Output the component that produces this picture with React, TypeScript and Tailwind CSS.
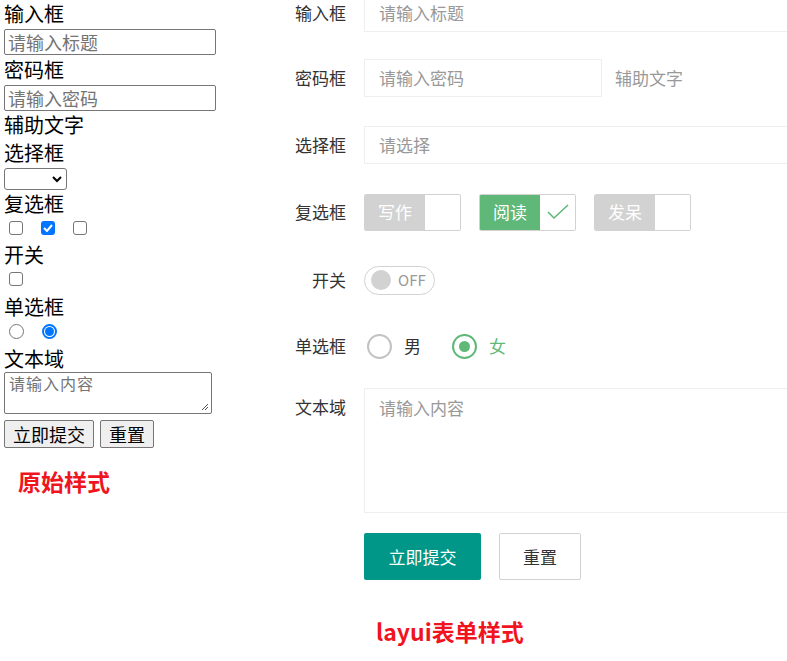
import React from "react";

const F = { fontFamily: '"Noto Sans CJK SC", "Microsoft YaHei", sans-serif' };

function Check({ label, on }: { label: string; on?: boolean }) {
  return (
    <div className={`flex h-[37px] w-[97px] border rounded-[2px] overflow-hidden ${on ? "border-[#d2d2d2]" : "border-[#d2d2d2]"}`}>
      <div className={`w-[60px] flex items-center justify-center text-white text-[17px] ${on ? "bg-[#5fb878]" : "bg-[#d2d2d2]"}`}>{label}</div>
      <div className="flex-1 bg-white flex items-center justify-center">
        {on && (
          <svg width="22" height="16" viewBox="0 0 22 16"><path d="M1 8l6 6L21 1" fill="none" stroke="#5fb878" strokeWidth="1.6" /></svg>
        )}
      </div>
    </div>
  );
}

function Row({ label, children, h = 38, mb = 27 }: { label: string; children: React.ReactNode; h?: number; mb?: number }) {
  return (
    <div className="flex" style={{ marginBottom: mb }}>
      <div className="w-[66px] text-right text-[17px] text-[#333] shrink-0" style={{ lineHeight: "38px" }}>{label}</div>
      <div className="ml-[18px] flex-1 flex items-center" style={{ minHeight: h }}>{children}</div>
    </div>
  );
}

export default function App() {
  return (
    <div className="flex bg-white w-[787px] h-[661px] overflow-hidden" style={F}>
      <div className="w-[280px] shrink-0 pl-[4px] text-[20px] text-black">
        <div className="h-[28px] leading-[28px]">输入框</div>
        <div className="mt-[1px] w-[212px] h-[26px] border border-[#767676] rounded-[2px] px-[3px] text-[18px] text-[#757575] leading-[24px]">请输入标题</div>
        <div className="h-[29px] leading-[29px]">密码框</div>
        <div className="mt-[1px] w-[212px] h-[26px] border border-[#767676] rounded-[2px] px-[3px] text-[18px] text-[#757575] leading-[24px]">请输入密码</div>
        <div className="h-[28px] leading-[28px]">辅助文字</div>
        <div className="h-[27px] leading-[27px]">选择框</div>
        <div className="mt-[2px] w-[63px] h-[22px] border border-[#767676] rounded-[3px] flex items-center justify-end pr-[4px]">
          <svg width="10" height="7" viewBox="0 0 10 7"><path d="M1 1l4 4 4-4" fill="none" stroke="#000" strokeWidth="2" /></svg>
        </div>
        <div className="h-[28px] leading-[28px]">复选框</div>
        <div className="flex gap-[18px] pl-[5px] mt-[3px]">
          <div className="w-[14px] h-[14px] border border-[#767676] rounded-[3px]" />
          <div className="w-[14px] h-[14px] bg-[#0075ff] rounded-[3px] flex items-center justify-center">
            <svg width="10" height="8" viewBox="0 0 10 8"><path d="M1 4l3 3 5-6" fill="none" stroke="#fff" strokeWidth="2" /></svg>
          </div>
          <div className="w-[14px] h-[14px] border border-[#767676] rounded-[3px]" />
        </div>
        <div className="h-[28px] leading-[28px] mt-[6px]">开关</div>
        <div className="pl-[5px] mt-[3px]"><div className="w-[14px] h-[14px] border border-[#767676] rounded-[3px]" /></div>
        <div className="h-[28px] leading-[28px] mt-[7px]">单选框</div>
        <div className="flex gap-[18px] pl-[5px] mt-[3px]">
          <div className="w-[15px] h-[15px] border border-[#767676] rounded-full" />
          <div className="w-[15px] h-[15px] border-2 border-[#0075ff] rounded-full flex items-center justify-center"><div className="w-[9px] h-[9px] bg-[#0075ff] rounded-full" /></div>
        </div>
        <div className="h-[28px] leading-[28px] mt-[6px]">文本域</div>
        <div className="relative -mt-[1px] w-[208px] h-[42px] border border-[#767676] rounded-[2px] px-[4px] text-[16px] text-[#757575] leading-[20px] tracking-[1px]">
          请输入内容
          <svg className="absolute right-[2px] bottom-[2px]" width="8" height="8" viewBox="0 0 8 8"><path d="M7 1L1 7M7 4L4 7" stroke="#555" strokeWidth="1" /></svg>
        </div>
        <div className="flex gap-[6px] mt-[6px] text-[18px]">
          <div className="h-[28px] px-[8px] border border-[#767676] rounded-[2px] bg-[#efefef] leading-[26px]">立即提交</div>
          <div className="h-[28px] px-[8px] border border-[#767676] rounded-[2px] bg-[#efefef] leading-[26px]">重置</div>
        </div>
        <div className="mt-[16px] ml-[14px] text-[23px] font-bold text-[#f0141e]">原始样式</div>
      </div>

      <div className="flex-1 -mt-[6px]">
        <Row label="输入框" mb={27}>
          <div className="h-[38px] flex-1 border border-[#eee] border-r-0 pl-[14px] text-[17px] text-[#999] leading-[36px]">请输入标题</div>
        </Row>
        <Row label="密码框" mb={29}>
          <div className="h-[38px] w-[238px] border border-[#eee] pl-[14px] text-[17px] text-[#999] leading-[36px]">请输入密码</div>
          <div className="ml-[13px] text-[17px] text-[#999]">辅助文字</div>
        </Row>
        <Row label="选择框" mb={29}>
          <div className="h-[38px] flex-1 border border-[#eee] border-r-0 pl-[14px] text-[17px] text-[#999] leading-[36px]">请选择</div>
        </Row>
        <Row label="复选框" mb={30}>
          <div className="flex gap-[18px]">
            <Check label="写作" />
            <Check label="阅读" on />
            <Check label="发呆" />
          </div>
        </Row>
        <Row label="开关" mb={28}>
          <div className="h-[29px] w-[71px] border border-[#d2d2d2] rounded-full flex items-center pl-[6px]">
            <div className="w-[20px] h-[20px] rounded-full bg-[#d2d2d2]" />
            <span className="ml-[7px] text-[15px] text-[#999]">OFF</span>
          </div>
        </Row>
        <Row label="单选框" mb={23}>
          <div className="flex items-center">
            <div className="ml-[3px] w-[25px] h-[25px] rounded-full border-2 border-[#c2c2c2]" />
            <span className="ml-[12px] text-[17px] text-[#333]">男</span>
            <div className="ml-[31px] w-[25px] h-[25px] rounded-full border-2 border-[#5fb878] flex items-center justify-center"><div className="w-[11px] h-[11px] rounded-full bg-[#5fb878]" /></div>
            <span className="ml-[12px] text-[17px] text-[#5fb878]">女</span>
          </div>
        </Row>
        <Row label="文本域" mb={20}>
          <div className="h-[125px] flex-1 self-start border border-[#eee] border-r-0 pl-[14px] pt-[6px] text-[17px] text-[#999]">请输入内容</div>
        </Row>
        <div className="flex ml-[84px] gap-[18px]">
          <div className="h-[47px] w-[117px] bg-[#009688] text-white text-[17px] flex items-center justify-center rounded-[2px]">立即提交</div>
          <div className="h-[47px] w-[82px] border border-[#d2d2d2] text-[#333] text-[17px] flex items-center justify-center rounded-[2px]">重置</div>
        </div>
        <div className="mt-[34px] ml-[96px] text-[23px] font-bold text-[#f0141e]">layui表单样式</div>
      </div>
    </div>
  );
}
